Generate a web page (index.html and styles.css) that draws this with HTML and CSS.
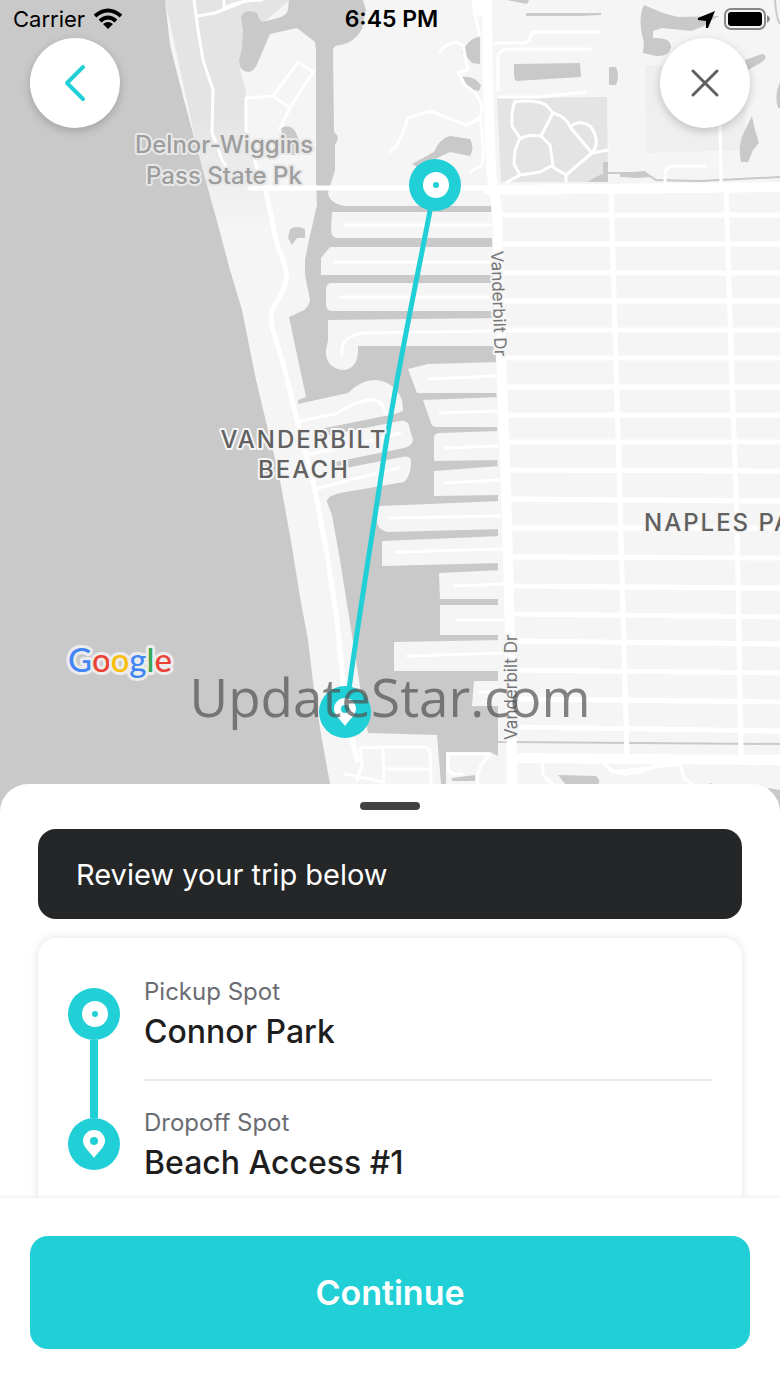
FILE: index.html
```html
<!DOCTYPE html>
<html lang="en">
<head>
<meta charset="utf-8">
<meta name="viewport" content="width=device-width, initial-scale=1">
<title>Review your trip</title>
<link rel="stylesheet" href="styles.css">
</head>
<body>
<main class="screen">
  <section class="map" aria-label="Trip map">
    <svg class="map-canvas" viewBox="0 0 780 812" preserveAspectRatio="xMidYMin slice">
      <defs>
        <linearGradient id="park-fade" x1="0" y1="0" x2="0" y2="1">
          <stop offset="0.5" stop-color="#e4e4e4"/>
          <stop offset="1" stop-color="#f5f5f5"/>
        </linearGradient>
      </defs>
      <rect class="land" width="780" height="812"/>
      <!-- state park -->
      <path fill="url(#park-fade)" d="M165 0H290L262 24 240 70 246 92 245 130 256 168 265 188 276 230H215Z"/>
      <path class="park-soft" d="M645 66 680 64 745 80 746 150 647 153Z"/>
      <path class="park" d="M497 98 607 97 608 182H501Z"/>
      <!-- open water -->
      <path class="water" d="M0 0H165L170 45 180 85 192 130 205 178 218 225 230 270 242 310 250 350 256 380 268 430 280 480 292 547 300 597 308 640 314 690 322 740 330 784 334 812H0Z"/>
      <!-- bay -->
      <path class="water" d="M289 0 288 10Q286 16 278 18L262 22Q258 18 257 13 244 8 241 17L243 30 242 48 239 60Q239 71 248 72 255 71 258 62L270 34 297 28 315 42 316 50 316 180 317 205 309 240 305 260 305 275 310 300Q308 309 302 311L289 317 297 355 306 397 298 400 300 436 320 470 340 492Q326 497 327 502L332 515 340 560 348 610 356 660 362 700 368 733 437 735 441 784 442 812H452L446 790V752H490L498 756V500L496 363 491 206H345Q329 203 328 193L335 170V145Q341 137 334 132L333 50Q334 45 341 45 355 42 362 29L366 10 363 0Z"/>
      <!-- canal peninsulas -->
      <g class="land">
        <path d="M332 212H500V238H338Q331 238 331 230Z"/>
        <path d="M330 247H500V275H321V258Z"/>
        <path d="M331 283H500V311H331Q326 310 326 304V290Q326 283 331 283Z"/>
        <path d="M328 320 500 318V346H358Q359 370 342 370 325 367 326 350L328 340Z"/>
        <path d="M408 369 428 364 500 362V393H417Z"/>
        <path d="M423 400 500 397V427H436Q431 427 430 420Z"/>
        <path d="M434 437Q435 433 440 433L500 431V460L434 461Z"/>
        <path d="M434 471 500 466V495L434 496Z"/>
        <path d="M380 506 502 501V529L388 532Q378 530 377 522V510Z"/>
        <path d="M382 541 502 536V563L382 566Z"/>
        <path d="M439 573 503 570V599H440Z"/>
        <path d="M440 605H503V635H440Z"/>
        <path d="M394 642 503 640V671H394Z"/>
        <path d="M474 681H503V706H472Z"/>
        <path d="M298 404 348 393Q360 380 376 380 395 382 402 400L403 411 395 414 320 429V437L400 421Q409 419 410 430L413 440Q412 446 404 448L330 463V471L402 457Q411 455 411 462 411 476 404 482L340 493 318 500 290 440Z"/>
      </g>
      <g class="water">
        <path d="M470 238H490V243Q489 246 485 246H470Z"/>
        <path d="M290 229Q296 225 305 229L305 238 297 238 292 245 288 238Z"/>
        <path d="M281 128Q290 124 295 131L300 142 296 155Q290 157 285 146Z"/>
        <path d="M412 164 434 152Q440 138 450 136L470 139Q475 148 470 156L450 152 418 167Z"/>
        <path d="M480 37V64L472 63 462 52Q470 37 480 37Z"/>
        <path d="M461 77Q474 75 481 85L479 91Q468 90 461 77Z"/>
        <path d="M514 64 580 63 581 77 516 81Q513 78 514 64Z"/>
        <path d="M609 67H616Q620 76 616 85H609Z"/>
        <path d="M526 13H601V15L580 16H526Z"/>
        <path d="M507 0H529L527 4Z"/>
        <path d="M644 5 663 13 678 17 720 16Q710 20 706 25L692 31 662 28 653 31V38Q672 37 671 48 668 57 656 56L643 53 644 42Q637 20 644 5Z"/>
        <path d="M745 60 762 54Q769 56 762 62L748 70Z"/>
        <path d="M752 116 755 130 759 143 753 150 748 162H741Q737 145 745 130Z"/>
        <path d="M780 82Q774 95 778 108H780Z"/>
        <path d="M588 182Q596 176 603 174V162H608V182ZM620 173 645 171 650 177 638 178 620 177Z"/>
        <path d="M558 775 596 776Q601 780 598 785H566ZM710 783 716 785H708ZM768 788 780 790V812Z"/>
        <path d="M452 778 475 775V781H452Z"/>
      </g>
      <path class="rail" d="M608 173H645L656 180 700 181 780 177M498 742 780 744M775 0Q776 18 780 24"/>
      <!-- Naples Park street grid -->
      <g class="road road-grid">
        <path d="M497 215H780M498 244H780M500 273H780M500 301H780M502 330H780M502 358H780M502 387H780M503 415H780M505 442H780M506 470 780 471M507 499 780 501M507 528H780M508 557 780 558M510 586 780 588M511 614 780 617M511 641 780 644M511 670 780 673M511 699 780 702M511 727 780 731"/>
        <path d="M611 188 615 330 620 500 627 757M726 188 731 350 737 520 741 757"/>
      </g>
      <g class="road road-lane">
        <path d="M345 225H490M335 262H490M340 297H490M342 355Q340 335 365 333L492 331M430 379 496 376M440 413 497 411M445 448 497 446M445 483 498 480M390 518 500 516M396 552 502 549M455 586 503 584M457 620H503M407 656 503 653M480 692H510"/>
        <path d="M300 421 335 414Q352 403 368 400 382 398 386 414M310 454 350 446 400 433M315 489 350 480 398 468"/>
        <path d="M224 0V8M224 8Q240 0 262 0M194 0 198 30 203 60 213 90 212 132 222 160 229 170M198 16 215 13 240 3"/>
        <path d="M246 98 273 96 298 62 313 72 290 108 273 96M290 108 280 128M246 98V130L256 165 263 188"/>
        <path d="M357 780 362 765 360 748 380 747H425L430 750 431 784M383 747 384 778M345 774 384 782M384 769H431"/>
        <path d="M448 754H488M448 754V770Q452 775 462 774M490 755Q475 768 478 784M542 762 543 775 554 786M602 760 612 772 682 764"/>
        <path d="M602 762Q610 773 625 774L640 772 660 764M680 765 684 778 693 785"/>
      </g>
      <g class="road road-lane">
        <path d="M473 0 475 15 480 35M440 52Q450 38 463 45L468 70 458 72 465 85Q487 100 480 117L466 125 430 111 408 118 404 130 397 145 390 152M480 117Q485 150 482 165L470 172M465 125Q476 123 481 117"/>
        <path d="M495 43H523Q530 43 532 32H600M498 90V58Q498 49 510 49H590M499 97H540L585 92"/>
        <path d="M515 101Q511 112 512 126L520 138 515 150 514 164 520 175M515 102Q535 99 546 105L553 113 541 136Q525 134 519 140M541 136 550 145 553 165M520 175 540 172 551 166 566 175V182M507 182 520 175M553 113Q567 117 570 127L592 153 608 150M570 127Q580 119 590 126 601 140 593 152L566 175"/>
        <path d="M665 182V174Q665 167 674 166H705M720 125 721 182"/>
      </g>
      <path class="road road-coast" d="M265 188 272 220Q275 240 283 260 290 275 283 290L275 305Q268 317 273 330L285 370 297 420 315 490 328 560 337 620 343 680 350 730 357 760"/>
      <path class="road road-coast" d="M250 188 490 188"/>
      <path class="road road-main" d="M487 0 488 90 491 170 497 210 502 380 507 520 510 640 512 757V812M488 190 780 187M512 758 780 760"/>
      <path class="road road-main" d="M478 0 479 12"/>

      <g class="place-park" text-anchor="middle">
        <text x="224" y="153">Delnor-Wiggins</text>
        <text x="224" y="184">Pass State Pk</text>
      </g>
      <path class="route" d="M435 185C415 290 395 380 382 470 370 550 355 640 346 712"/>
      <g class="place" text-anchor="middle">
        <text x="304" y="448">VANDERBILT</text>
        <text x="304" y="478">BEACH</text>
      </g>
      <text class="place" x="644" y="531">NAPLES PARK</text>
      <text class="street" transform="translate(491 251) rotate(88)">Vanderbilt Dr</text>
      <text class="street" transform="translate(517 740) rotate(-90)">Vanderbilt Dr</text>
      <text class="google" x="68" y="672"><tspan class="g-blue">G</tspan><tspan class="g-red">o</tspan><tspan class="g-yellow">o</tspan><tspan class="g-blue">g</tspan><tspan class="g-green">l</tspan><tspan class="g-red">e</tspan></text>
      <circle class="pin" cx="435" cy="185" r="26"/>
      <circle class="pin-hole" cx="436" cy="185" r="13"/>
      <circle class="pin" cx="436" cy="185" r="3"/>
      <circle class="pin" cx="345" cy="712" r="26"/>
      <path class="pin-hole" d="M345 726C341 720 334 715 334 709A11 11 0 0 1 356 709C356 715 349 720 345 726Z"/>
      <circle class="pin" cx="345" cy="709" r="4"/>
      <text class="watermark" x="390" y="717" text-anchor="middle">UpdateStar.com</text>
    </svg>
    <header class="status-bar">
      <span class="carrier">Carrier
        <svg width="30" height="22" viewBox="0 0 30 22" aria-hidden="true"><path fill="none" stroke="#000" stroke-width="4" d="M2 8Q15-3 28 8M7 13Q15 6 23 13"/><path d="M10 16Q15 12 20 16L15 21Z"/></svg>
      </span>
      <time>6:45 PM</time>
      <span class="indicators">
        <svg width="18" height="18" viewBox="0 0 18 18" aria-hidden="true"><path d="M17 1 0 8V10L8 11V18H10Z"/></svg>
        <svg width="46" height="22" viewBox="0 0 46 22" aria-hidden="true"><rect x="1" y="1" width="40" height="20" rx="6" fill="#f5f5f5" stroke="#888" stroke-width="2"/><rect x="4" y="4" width="34" height="14" rx="3"/><path fill="#888" d="M43 7Q46 9 46 11 46 13 43 15Z"/></svg>
      </span>
    </header>
    <nav class="map-actions">
      <button class="round-button" type="button" aria-label="Back"><svg width="40" height="40" viewBox="0 0 40 40"><path class="chevron" d="M28 4 12 20 28 36"/></svg></button>
      <button class="round-button" type="button" aria-label="Close"><svg width="40" height="40" viewBox="0 0 40 40"><path class="cross" d="M8 8 32 32M32 8 8 32"/></svg></button>
    </nav>
  </section>

  <section class="sheet">
    <div class="grabber"></div>
    <h1 class="banner">Review your trip below</h1>
    <div class="trip">
      <div class="trip-line" aria-hidden="true">
        <svg width="52" height="52" viewBox="0 0 52 52"><circle class="pin" cx="26" cy="26" r="26"/><circle class="pin-hole" cx="27" cy="26" r="13"/><circle class="pin" cx="27" cy="26" r="3"/></svg>
        <span class="connector"></span>
        <svg width="52" height="52" viewBox="0 0 52 52"><circle class="pin" cx="26" cy="26" r="26"/><path class="pin-hole" d="M26 40C22 34 15 29 15 23A11 11 0 0 1 37 23C37 29 30 34 26 40Z"/><circle class="pin" cx="26" cy="23" r="4"/></svg>
      </div>
      <dl class="stops">
        <div class="stop"><dt>Pickup Spot</dt><dd>Connor Park</dd></div>
        <div class="stop"><dt>Dropoff Spot</dt><dd>Beach Access #1</dd></div>
      </dl>
    </div>
  </section>

  <footer class="footer">
    <button class="continue" type="button">Continue</button>
  </footer>
</main>
</body>
</html>
```
FILE: styles.css
```css
* { box-sizing: border-box; }

body {
  margin: 0;
  font-family: Inter, "Liberation Sans", sans-serif;
  color: #1e1e1f;
  background: #fff;
}

.screen {
  display: flex;
  flex-direction: column;
  min-height: 100vh;
}

.map {
  position: relative;
  flex: 1;
  min-height: 480px;
}

.map-canvas {
  position: absolute;
  inset: 0;
  width: 100%;
  height: 100%;
}

.land { fill: #f5f5f5; }
.water { fill: #c9c9c9; }
.park { fill: #e4e4e4; }
.park-soft { fill: #efefef; }
.road { fill: none; stroke: #fff; stroke-linecap: round; stroke-linejoin: round; }
.road-grid { stroke-width: 5; }
.road-lane { stroke-width: 3; }
.road-coast { stroke-width: 5; }
.road-main { stroke-width: 10; }
.rail { fill: none; stroke: #c9c9c9; stroke-width: 2; }
.route { fill: none; stroke: #21cfd6; stroke-width: 5; }
.pin { fill: #21cfd6; }
.pin-hole { fill: #fff; }

.place, .place-park, .street, .google {
  paint-order: stroke;
  stroke: #f5f5f5;
  stroke-width: 4;
  stroke-linejoin: round;
}
.place { font-size: 24px; font-weight: 500; letter-spacing: 2px; fill: #616161; }
.place-park { font-size: 24px; font-weight: 500; fill: #9e9e9e; stroke: #e8e8e8; }
.street { font-size: 17px; fill: #757575; }
.google { font-family: Lato, sans-serif; font-size: 33px; font-weight: 500; stroke: #ececec; stroke-width: 6; }
.g-blue { fill: #4285f4; }
.g-red { fill: #ea4335; }
.g-yellow { fill: #fbbc05; }
.g-green { fill: #34a853; }
.watermark { font-family: "Open Sans", "Noto Sans", sans-serif; font-size: 53px; fill: #505050; fill-opacity: 0.7; }

.status-bar {
  position: relative;
  display: grid;
  grid-template-columns: 1fr auto 1fr;
  align-items: center;
  height: 38px;
  padding: 0 10px 0 13px;
  font-size: 22px;
  color: #000;
}
.status-bar time { font-size: 23px; font-weight: 600; }
.carrier, .indicators { display: flex; align-items: center; gap: 8px; }
.indicators { justify-content: flex-end; }

.map-actions {
  position: relative;
  display: flex;
  justify-content: space-between;
  padding: 0 30px;
}
.round-button {
  display: grid;
  place-items: center;
  width: 90px;
  height: 90px;
  padding: 0;
  border: 0;
  border-radius: 50%;
  background: #fff;
  box-shadow: 0 3px 10px rgba(0, 0, 0, 0.2);
}
.chevron, .cross { fill: none; stroke-linecap: round; stroke-linejoin: round; }
.chevron { stroke: #21cfd6; stroke-width: 4; }
.cross { stroke: #606060; stroke-width: 3; }

.sheet {
  position: relative;
  margin-top: -28px;
  padding: 18px 38px 0;
  overflow: hidden;
  border-radius: 28px 28px 0 0;
  background: #fff;
}
.grabber {
  width: 60px;
  height: 8px;
  margin: 0 auto;
  border-radius: 4px;
  background: #404142;
}
.banner {
  margin: 19px 0;
  padding: 28px 38px 26px;
  border-radius: 18px;
  background: #242628;
  color: #fff;
  font-size: 29px;
  font-weight: 400;
  line-height: 36px;
}
.trip {
  display: flex;
  gap: 24px;
  padding: 0 30px;
  border-radius: 18px 18px 0 0;
  box-shadow: 0 0 10px rgba(0, 0, 0, 0.12);
}
.trip-line {
  display: flex;
  flex-direction: column;
  align-items: center;
  padding: 50px 0 28px;
}
.trip-line svg { display: block; }
.connector { flex: 1; width: 8px; background: #21cfd6; }
.stops { flex: 1; margin: 0; padding-top: 11px; }
.stop { height: 130px; padding-top: 26px; }
.stop + .stop { height: 119px; padding-top: 25px; border-top: 2px solid #e9e9e9; }
.stop dt { color: #6b6c72; font-size: 24px; line-height: 34px; }
.stop dd { margin: 0; font-size: 32px; font-weight: 500; line-height: 46px; }

.footer {
  position: relative;
  padding: 38px 30px;
  background: #fff;
  box-shadow: 0 -1px 4px rgba(0, 0, 0, 0.08);
}
.continue {
  display: block;
  width: 100%;
  padding: 34px;
  border: 0;
  border-radius: 18px;
  background: #21cfd6;
  color: #fff;
  font-family: inherit;
  font-size: 34px;
  font-weight: 600;
  line-height: 45px;
}
```
